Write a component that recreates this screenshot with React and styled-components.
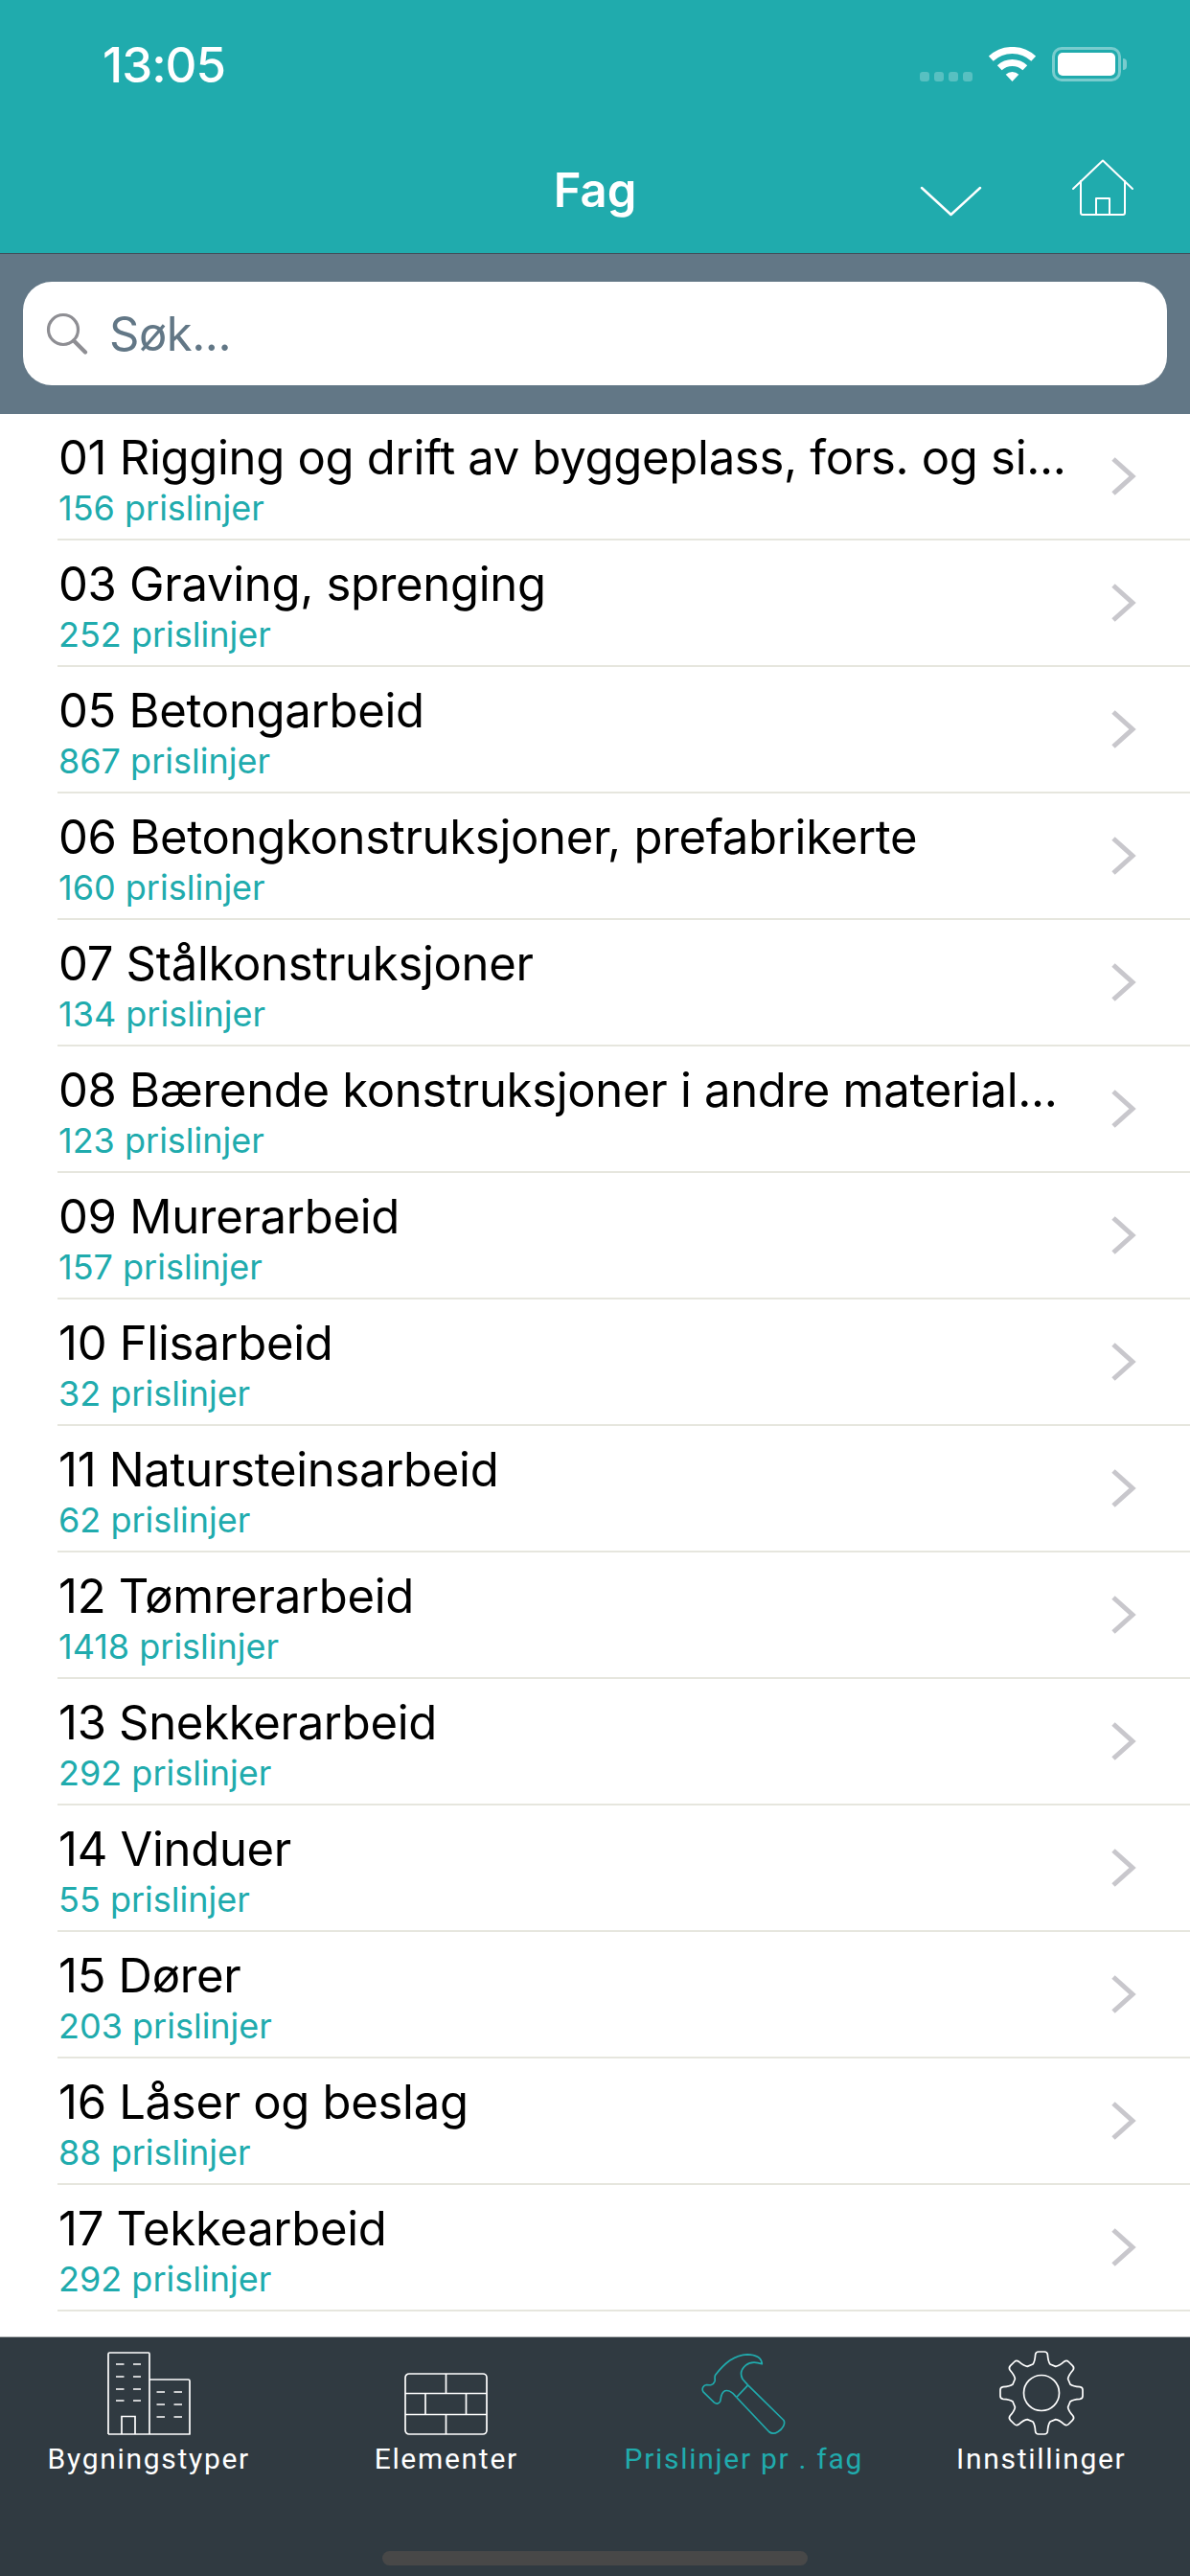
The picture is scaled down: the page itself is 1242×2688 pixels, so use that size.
import React from 'react'
import styled, { createGlobalStyle } from 'styled-components'

const teal = '#20abad'
const sans = 'Inter, "Liberation Sans", sans-serif'

const trades = [
  ['01 Rigging og drift av byggeplass, fors. og si...', 156],
  ['03 Graving, sprenging', 252],
  ['05 Betongarbeid', 867],
  ['06 Betongkonstruksjoner, prefabrikerte', 160],
  ['07 Stålkonstruksjoner', 134],
  ['08 Bærende konstruksjoner i andre material...', 123],
  ['09 Murerarbeid', 157],
  ['10 Flisarbeid', 32],
  ['11 Natursteinsarbeid', 62],
  ['12 Tømrerarbeid', 1418],
  ['13 Snekkerarbeid', 292],
  ['14 Vinduer', 55],
  ['15 Dører', 203],
  ['16 Låser og beslag', 88],
  ['17 Tekkearbeid', 292],
]

// eight teeth round the centre of a 88x88 box
function gearPath() {
  const pt = (a, r, w) => {
    const x = 44 + Math.sin(a) * r + Math.cos(a) * w
    const y = 44 - Math.cos(a) * r + Math.sin(a) * w
    return `${x.toFixed(1)} ${y.toFixed(1)}`
  }
  let d = ''
  for (let i = 0; i < 8; i++) {
    const a = (i * Math.PI) / 4
    d += `${i === 0 ? 'M' : 'L'}${pt(a, 30, -9)} Q${pt(a, 33, -6.8)} ${pt(a, 40, -6.4)} Q${pt(a, 43, -6)} ${pt(a, 43, -3)} `
    d += `L${pt(a, 43, 3)} Q${pt(a, 43, 6)} ${pt(a, 40, 6.4)} Q${pt(a, 33, 6.8)} ${pt(a, 30, 9)} `
  }
  return d + 'Z'
}

function BuildingIcon() {
  return (
    <svg width="87" height="87" viewBox="0 0 87 87" fill="none" stroke="#fff" strokeWidth="1.7">
      <path d="M1 86V2.5Q1 1 2.5 1H43Q44 1 44 2.5V86M44 29H84.5Q86 29 86 30.5V86H1" strokeLinejoin="round" />
      <path d="M15 86V67.5H29V86" />
      <path d="M9 13h8.5M27 13h8M9 26h8.5M27 26h8M9 39h8.5M27 39h8M9 51h8.5M27 51h8M51.5 42h8.5M69.5 42h8.5M51.5 55h8.5M69.5 55h8.5M51.5 68h8.5M69.5 68h8.5" />
    </svg>
  )
}

function BrickIcon() {
  return (
    <svg width="87" height="65" viewBox="0 0 87 65" fill="none" stroke="#fff" strokeWidth="1.7">
      <rect x="1" y="1" width="85" height="63" rx="4" />
      <path d="M1 21.5H86M1 43.5H86M43.5 1V21.5M43.5 43.5V64M22 21.5V43.5M64.5 21.5V43.5" />
    </svg>
  )
}

function HammerIcon() {
  return (
    <svg width="88" height="85" viewBox="36 26 264 254" fill="none" stroke={teal} strokeWidth="5" strokeLinejoin="round">
      <path d="M182 124L294 234C300 245 290 262 276 270C265 277 255 276 248 270L146 162" />
      <path d="M182 124L146 162" />
      <path d="M146 162C135 148 122 138 110 142C96 148 98 165 95 175C90 183 83 184 76 178L42 145C36 135 42 125 52 123C62 124 72 126 78 112C80 105 76 98 80 92C105 60 135 30 180 28C205 28 225 38 226 58C210 52 192 48 175 62C160 75 157 90 165 105L182 124" />
    </svg>
  )
}

function GearIcon() {
  return (
    <svg width="88" height="88" viewBox="0 0 88 88" fill="none" stroke="#fff" strokeWidth="1.7" strokeLinejoin="round">
      <path d={gearPath()} />
      <circle cx="44" cy="44" r="18.5" />
    </svg>
  )
}

const tabs = [
  { label: 'Bygningstyper', icon: <BuildingIcon /> },
  { label: 'Elementer', icon: <BrickIcon /> },
  { label: 'Prislinjer pr . fag', icon: <HammerIcon />, active: true },
  { label: 'Innstillinger', icon: <GearIcon /> },
]

export default function App() {
  return (
    <Screen>
      <GlobalStyle />
      <Header>
        <StatusBar>
          <Clock>13:05</Clock>
          <StatusIcons>
            <SignalDots>
              <i /><i /><i /><i />
            </SignalDots>
            <svg width="49" height="36" viewBox="0 0 49 36" fill="none" stroke="#fff" strokeWidth="7">
              <path d="M2.3 12.2A32.5 32.5 0 0 1 46.7 12.2" />
              <path d="M11.2 21.7A19.5 19.5 0 0 1 37.8 21.7" />
              <path d="M24.5 36L17.7 28.7A10 10 0 0 1 31.3 28.7Z" fill="#fff" stroke="none" />
            </svg>
            <Battery>
              <BatteryFill />
            </Battery>
          </StatusIcons>
        </StatusBar>
        <NavBar>
          <span />
          <NavTitle>Fag</NavTitle>
          <NavActions>
            <svg width="65" height="32" viewBox="0 0 65 32" fill="none" stroke="#fff" strokeWidth="2.5" strokeLinecap="round" strokeLinejoin="round">
              <path d="M2 2L32.5 30L63 2" />
            </svg>
            <svg width="66" height="60" viewBox="0 0 66 60" fill="none" stroke="#fff" strokeWidth="2" strokeLinecap="round" strokeLinejoin="round">
              <path d="M2 31L33 1.5L64 31" />
              <path d="M10 23V56Q10 58 12 58H54Q56 58 56 56V23" />
              <path d="M26 58V41H40V58" />
            </svg>
          </NavActions>
        </NavBar>
      </Header>
      <SearchBand>
        <SearchBox>
          <svg width="44" height="44" viewBox="0 0 44 44" fill="none" stroke="#8e8e93" strokeWidth="3.2" strokeLinecap="round">
            <circle cx="18" cy="18" r="15.5" />
            <path d="M29 29.5L41 41.5" strokeWidth="4.2" />
          </svg>
          <SearchHint>Søk...</SearchHint>
        </SearchBox>
      </SearchBand>
      <List>
        {trades.map(([title, count]) => (
          <Row key={title}>
            <RowText>
              <RowTitle>{title}</RowTitle>
              <RowCount>{count} prislinjer</RowCount>
            </RowText>
            <svg width="28" height="40" viewBox="0 0 28 40" fill="none" stroke="#c8c7cc" strokeWidth="5">
              <path d="M3 2L23 20L3 38" />
            </svg>
          </Row>
        ))}
      </List>
      <TabBar>
        <TabRow>
          {tabs.map((t) => (
            <Tab key={t.label} $active={t.active}>
              <TabIcon>{t.icon}</TabIcon>
              {t.label}
            </Tab>
          ))}
        </TabRow>
        <HomeIndicator />
      </TabBar>
    </Screen>
  )
}

const GlobalStyle = createGlobalStyle`
  html, body {
    margin: 0;
    padding: 0;
    background: #fff;
  }
`

const Screen = styled.div`
  display: flex;
  flex-direction: column;
  width: 1242px;
  height: 2688px;
  overflow: hidden;
  font-family: ${sans};
`

const Header = styled.header`
  box-sizing: border-box;
  height: 265px;
  background: ${teal};
  border-bottom: 1px solid #3f4f5a;
  color: #fff;
`

const StatusBar = styled.div`
  display: flex;
  align-items: flex-start;
  justify-content: space-between;
  box-sizing: border-box;
  height: 160px;
  padding: 49px 72px 0 107px;
`

const Clock = styled.div`
  font-size: 51px;
  font-weight: 500;
  line-height: 38px;
  letter-spacing: -1px;
`

const StatusIcons = styled.div`
  display: flex;
  align-items: flex-start;
  gap: 17px;
`

const SignalDots = styled.div`
  display: flex;
  gap: 5px;
  margin: 26px 0 0;

  i {
    width: 10px;
    height: 10px;
    border-radius: 3px;
    background: rgba(255, 255, 255, 0.25);
  }
`

const Battery = styled.div`
  position: relative;
  box-sizing: border-box;
  width: 72px;
  height: 36px;
  padding: 3px;
  border: 3px solid rgba(255, 255, 255, 0.4);
  border-radius: 10px;

  &::after {
    content: '';
    position: absolute;
    top: 9px;
    right: -9px;
    width: 4px;
    height: 12px;
    border-radius: 0 6px 6px 0;
    background: rgba(255, 255, 255, 0.4);
  }
`

const BatteryFill = styled.div`
  height: 100%;
  border-radius: 5px;
  background: #fff;
`

const NavBar = styled.div`
  display: grid;
  grid-template-columns: 1fr auto 1fr;
  align-items: flex-start;
`

const NavTitle = styled.h1`
  margin: 9px 0 0;
  font-size: 49px;
  font-weight: 600;
  line-height: 60px;
`

const NavActions = styled.div`
  display: flex;
  align-items: flex-end;
  justify-content: flex-end;
  gap: 93px;
  height: 60px;
  padding: 6px 58px 0 0;
`

const SearchBand = styled.div`
  box-sizing: border-box;
  height: 167px;
  padding: 29px 24px 0;
  background: #627786;
`

const SearchBox = styled.div`
  display: flex;
  align-items: center;
  gap: 22px;
  box-sizing: border-box;
  height: 108px;
  padding: 0 0 0 24px;
  border-radius: 30px;
  background: #fff;
`

const SearchHint = styled.span`
  font-size: 49px;
  letter-spacing: -0.5px;
  color: #627786;
`

const List = styled.main`
  flex: 1;
  min-height: 0;
  overflow: hidden;
`

const Row = styled.div`
  display: flex;
  align-items: center;
  box-sizing: border-box;
  height: 132px;
  margin-left: 60px;
  padding-right: 55px;
  border-bottom: 2px solid #e6e6de;
`

const RowText = styled.div`
  flex: 1;
  min-width: 0;
  padding-top: 6px;
`

const RowTitle = styled.div`
  margin-left: 1px;
  font-size: 49px;
  line-height: 60px;
  letter-spacing: -0.3px;
  color: #000;
  white-space: nowrap;
`

const RowCount = styled.div`
  margin-left: 1px;
  font-size: 36px;
  line-height: 44px;
  color: ${teal};
`

const TabBar = styled.nav`
  display: flex;
  flex-direction: column;
  box-sizing: border-box;
  height: 250px;
  padding-top: 14px;
  background: #303a41;
  border-top: 1px solid #b0b4b6;
`

const TabRow = styled.div`
  display: grid;
  grid-template-columns: repeat(4, 1fr);
`

const Tab = styled.div`
  display: flex;
  flex-direction: column;
  align-items: center;
  font-family: Roboto, "Liberation Sans", sans-serif;
  font-size: 30px;
  font-weight: 400;
  line-height: 36px;
  letter-spacing: 1.7px;
  white-space: nowrap;
  color: ${(p) => (p.$active ? teal : '#fff')};
`

const TabIcon = styled.div`
  display: flex;
  align-items: flex-end;
  height: 88px;
  margin-bottom: 7px;
`

const HomeIndicator = styled.div`
  width: 444px;
  height: 15px;
  margin: 78px auto 0;
  border-radius: 8px;
  background: #484848;
`
